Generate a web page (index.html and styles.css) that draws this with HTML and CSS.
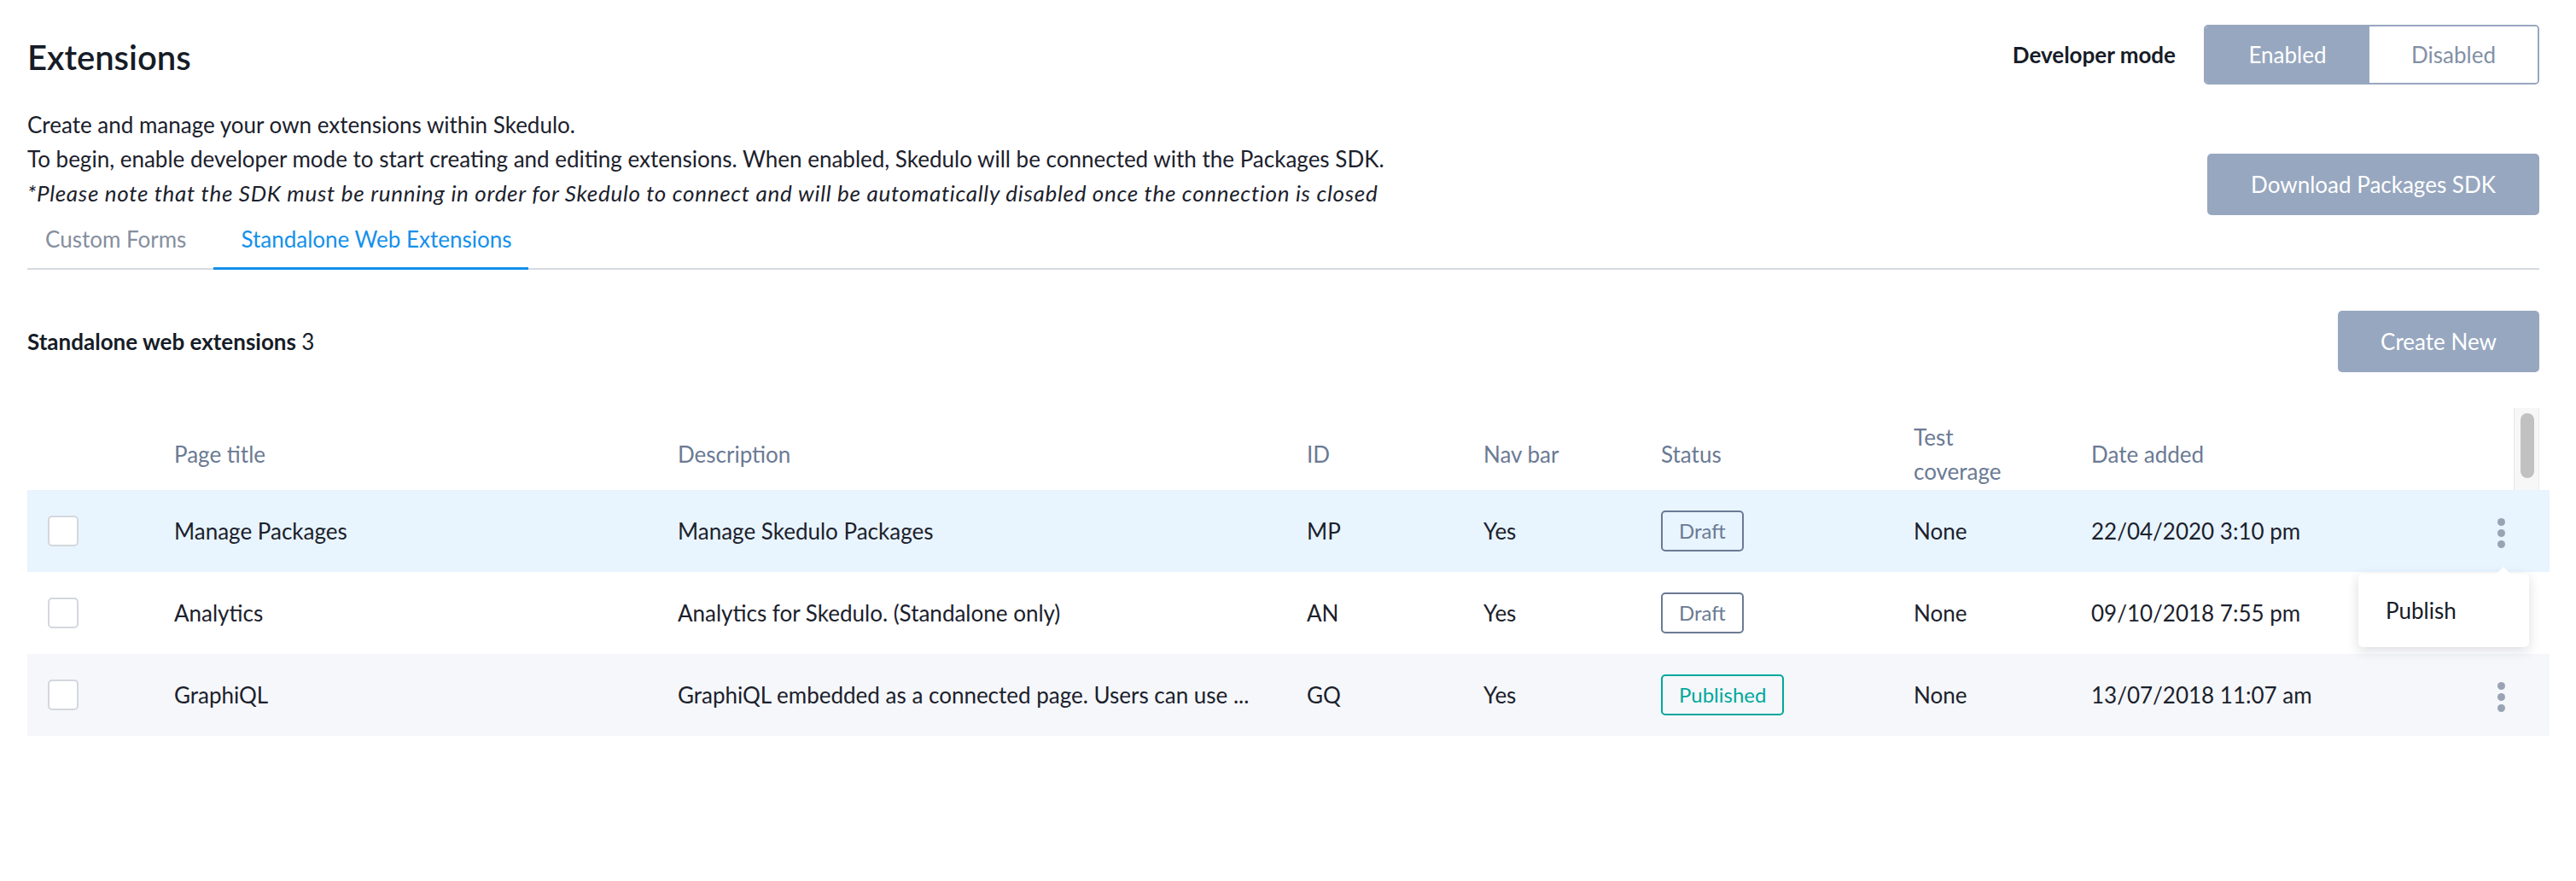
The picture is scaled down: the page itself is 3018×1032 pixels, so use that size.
FILE: index.html
```html
<!DOCTYPE html>
<html lang="en">
<head>
<meta charset="utf-8">
<title>Extensions</title>
<link rel="stylesheet" href="styles.css">
</head>
<body>
<div class="page">
  <header class="top">
    <h1 class="title">Extensions</h1>
    <div class="devmode">
      <span class="devmode-label">Developer mode</span>
      <div class="toggle">
        <span class="toggle-opt toggle-on">Enabled</span>
        <span class="toggle-opt">Disabled</span>
      </div>
    </div>
  </header>

  <div class="intro">
    <div class="intro-text">
      <p>Create and manage your own extensions within Skedulo.</p>
      <p>To begin, enable developer mode to start creating and editing extensions. When enabled, Skedulo will be connected with the Packages SDK.</p>
      <p class="note">*Please note that the SDK must be running in order for Skedulo to connect and will be automatically disabled once the connection is closed</p>
    </div>
    <button class="btn btn-sdk">Download Packages SDK</button>
  </div>

  <nav class="tabs">
    <span class="tab">Custom Forms</span>
    <span class="tab tab-active">Standalone Web Extensions</span>
  </nav>

  <div class="section-head">
    <h2 class="section-title">Standalone web extensions <span class="count">3</span></h2>
    <button class="btn btn-create">Create New</button>
  </div>

  <div class="table">
    <div class="thead">
      <div class="grid head-row">
        <div></div>
        <div>Page title</div>
        <div>Description</div>
        <div>ID</div>
        <div>Nav bar</div>
        <div>Status</div>
        <div>Test<br>coverage</div>
        <div>Date added</div>
      </div>
      <div class="scrollbar"><div class="thumb"></div></div>
    </div>

    <div class="grid row row-selected">
      <div class="cell-check"><span class="checkbox"></span></div>
      <div>Manage Packages</div>
      <div>Manage Skedulo Packages</div>
      <div>MP</div>
      <div>Yes</div>
      <div><span class="badge badge-draft">Draft</span></div>
      <div>None</div>
      <div>22/04/2020 3:10 pm</div>
      <div class="cell-menu">
        <span class="kebab"><i></i><i></i><i></i>
          <span class="popover">Publish</span>
        </span>
      </div>
    </div>

    <div class="grid row">
      <div class="cell-check"><span class="checkbox"></span></div>
      <div>Analytics</div>
      <div>Analytics for Skedulo. (Standalone only)</div>
      <div>AN</div>
      <div>Yes</div>
      <div><span class="badge badge-draft">Draft</span></div>
      <div>None</div>
      <div>09/10/2018 7:55 pm</div>
      <div class="cell-menu"></div>
    </div>

    <div class="grid row row-alt">
      <div class="cell-check"><span class="checkbox"></span></div>
      <div>GraphiQL</div>
      <div class="nowrap">GraphiQL embedded as a connected page. Users can use ...</div>
      <div>GQ</div>
      <div>Yes</div>
      <div><span class="badge badge-published">Published</span></div>
      <div>None</div>
      <div>13/07/2018 11:07 am</div>
      <div class="cell-menu">
        <span class="kebab"><i></i><i></i><i></i></span>
      </div>
    </div>
  </div>
</div>
</body>
</html>
```

FILE: styles.css
```css
* { box-sizing: border-box; }

html, body {
  margin: 0;
  padding: 0;
  background: #ffffff;
}

body {
  font-family: "Lato", "Noto Sans", sans-serif;
  font-size: 26px;
  color: #1b212c;
}

.page {
  padding: 29px 43px 0 32px;
}

/* top header */
.top {
  display: flex;
  justify-content: space-between;
  align-items: center;
  height: 70px;
}

.title {
  margin: 6px 0 0 0;
  font-size: 40px;
  font-weight: 600;
  line-height: 48px;
  color: #161c27;
}

.devmode {
  display: flex;
  align-items: center;
  gap: 33px;
}

.devmode-label {
  font-weight: 700;
  font-size: 26px;
  color: #161c27;
}

.toggle {
  display: flex;
  width: 393px;
  height: 70px;
  border: 2px solid #97a7bf;
  border-radius: 5px;
  overflow: hidden;
}

.toggle-opt {
  flex: 1;
  display: flex;
  align-items: center;
  justify-content: center;
  color: #8390a6;
  background: #ffffff;
}

.toggle-on {
  flex: 0 0 192px;
  background: #97a7bf;
  color: #ffffff;
}

/* intro */
.intro {
  display: flex;
  justify-content: space-between;
  align-items: flex-start;
  margin-top: 27px;
}

.intro-text p {
  margin: 0;
  line-height: 40px;
}

.intro-text .note {
  font-style: italic;
  letter-spacing: 0.7px;
}

.btn {
  border: none;
  border-radius: 5px;
  background: #97a7bf;
  color: #ffffff;
  font-family: inherit;
  font-size: 26px;
  height: 72px;
  padding: 0;
}

.btn-sdk {
  width: 389px;
  margin-top: 54px;
}

.btn-create {
  width: 236px;
}

/* tabs */
.tabs {
  display: flex;
  border-bottom: 2px solid #d6dae1;
}

.tab {
  padding: 8px 20px 13px 32px;
  line-height: 40px;
  color: #858e9e;
  border-bottom: 3px solid transparent;
  margin-bottom: -2px;
}

.tab:first-child {
  padding-left: 21px;
  padding-right: 32px;
}

.tab-active {
  color: #1590ea;
  border-bottom-color: #1590ea;
}

/* section head */
.section-head {
  display: flex;
  justify-content: space-between;
  align-items: center;
  margin-top: 48px;
}

.section-title {
  margin: 0;
  font-size: 26px;
  font-weight: 700;
  color: #161c27;
}

.count {
  font-weight: 400;
}

/* table */
.table {
  margin-top: 42px;
  margin-right: -12px;
}

.grid {
  display: grid;
  grid-template-columns: 172px 590px 737px 207px 208px 296px 208px 1fr 114px;
  align-items: center;
}

.thead {
  display: flex;
  margin-right: 12px;
  height: 96px;
}

.head-row {
  flex: 1;
  grid-template-columns: 172px 590px 737px 207px 208px 296px 208px 1fr;
  padding-top: 12px;
  color: #6b7a94;
  line-height: 40px;
}

.scrollbar {
  flex: 0 0 30px;
  background: #f7f7f7;
  border-left: 1px solid #e6e6e6;
  border-right: 1px solid #ececec;
  padding: 6px 0 0 7px;
}

.thumb {
  width: 16px;
  height: 76px;
  border-radius: 8px;
  background: #c1c1c1;
}

.row {
  height: 96px;
  background: #ffffff;
}

.row-selected {
  background: #e8f4fe;
}

.row-alt {
  background: #f5f7fa;
}

.cell-check {
  padding-left: 24px;
  display: flex;
  align-items: center;
}

.checkbox {
  display: block;
  width: 36px;
  height: 36px;
  border: 2px solid #d4d7de;
  border-radius: 5px;
  background: #ffffff;
}

.nowrap {
  white-space: nowrap;
}

.badge {
  display: inline-block;
  height: 48px;
  line-height: 44px;
  padding: 0 19px;
  border: 2px solid #6b7a94;
  border-radius: 5px;
  font-size: 24px;
}

.badge-draft {
  color: #6b7a94;
  border-color: #6b7a94;
}

.badge-published {
  color: #00a89c;
  border-color: #00a89c;
}

.cell-menu {
  display: flex;
  align-items: center;
  padding-left: 32px;
}

.kebab {
  position: relative;
  width: 50px;
  height: 40px;
  display: flex;
  flex-direction: column;
  align-items: center;
  justify-content: center;
  gap: 4px;
  margin-top: 4px;
}

.kebab i {
  display: block;
  width: 9px;
  height: 9px;
  border-radius: 50%;
  background: #9aa3b4;
}

.popover {
  position: absolute;
  z-index: 5;
  top: 68px;
  left: -142px;
  width: 200px;
  height: 86px;
  background: #ffffff;
  border-radius: 5px;
  box-shadow: 0 4px 14px rgba(30, 40, 60, 0.16);
  padding-left: 32px;
  display: flex;
  align-items: center;
  color: #161c27;
  font-size: 26px;
}

.popover::before {
  content: "";
  position: absolute;
  top: -8px;
  left: 161px;
  border-left: 9px solid transparent;
  border-right: 9px solid transparent;
  border-bottom: 9px solid #ffffff;
}
```
